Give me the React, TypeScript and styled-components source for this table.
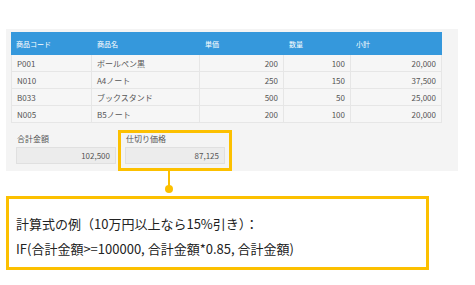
import React from "react";
import styled, { createGlobalStyle } from "styled-components";

const Global = createGlobalStyle`
  html, body { margin: 0; padding: 0; background: #fff; }
  body { font-family: "Noto Sans CJK JP", "Noto Sans", sans-serif; }
`;

const YELLOW = "#fcc000";

const Page = styled.div`
  width: 475px;
  height: 285px;
  padding: 29px 0 0 6px;
  box-sizing: border-box;
`;

const Panel = styled.div`
  width: 452px;
  height: 142px;
  background: #f4f4f4;
  padding: 3px 0 0 5px;
  box-sizing: border-box;
  position: relative;
`;

const Table = styled.div`
  width: 431px;
  display: grid;
  grid-template-columns: 81px 108px 84px 67px 91px;
`;

const HeadCell = styled.div`
  height: 23px;
  background: #3598dc;
  color: #fff;
  font-size: 7px;
  display: flex;
  align-items: center;
  padding-left: 5px;
  box-sizing: border-box;
`;

const Cell = styled.div<{ $num?: boolean }>`
  height: 17px;
  background: #f6f6f6;
  border-right: 1px solid #e6e6e6;
  border-bottom: 1px solid #e6e6e6;
  color: #555;
  font-size: 8px;
  display: flex;
  align-items: center;
  justify-content: ${(p) => (p.$num ? "flex-end" : "flex-start")};
  padding: 0 5px;
  box-sizing: border-box;
  &:nth-child(5n + 1) { border-left: 1px solid #e6e6e6; }
`;

const Summary = styled.div`
  display: flex;
  gap: 9px;
  padding: 11px 0 0 5px;
`;

const Field = styled.div`
  position: relative;
  display: flex;
  flex-direction: column;
  gap: 4px;
  width: 100px;
`;

const Label = styled.div`
  color: #555;
  font-size: 8px;
  height: 9px;
  line-height: 9px;
  padding-left: 1px;
`;

const Box = styled.div`
  height: 17px;
  background: #ececec;
  border: 1px solid #e0e0e0;
  box-sizing: border-box;
  color: #555;
  font-size: 8px;
  display: flex;
  align-items: center;
  justify-content: flex-end;
  padding-right: 5px;
`;

const Highlight = styled.div`
  position: absolute;
  left: -7px;
  top: -4px;
  width: 114px;
  height: 41px;
  border: 3px solid ${YELLOW};
  box-sizing: border-box;
`;

const Connector = styled.div`
  position: absolute;
  left: 47px;
  top: 38px;
  width: 2px;
  height: 18px;
  background: ${YELLOW};
  &::after {
    content: "";
    position: absolute;
    left: -3px;
    bottom: -4px;
    width: 8px;
    height: 8px;
    border-radius: 50%;
    background: ${YELLOW};
  }
`;

const Note = styled.div`
  margin-top: 25px;
  width: 423px;
  height: 74px;
  border: 3px solid ${YELLOW};
  box-sizing: border-box;
  padding: 16px 0 0 7px;
  display: flex;
  flex-direction: column;
  gap: 7px;
  color: #222;
  font-size: 13px;
`;

const NoteLine = styled.div`
  line-height: 18px;
  height: 18px;
`;

const rows = [
  ["P001", "ボールペン黒", "200", "100", "20,000"],
  ["N010", "A4ノート", "250", "150", "37,500"],
  ["B033", "ブックスタンド", "500", "50", "25,000"],
  ["N005", "B5ノート", "200", "100", "20,000"],
];

export default function App() {
  return (
    <Page>
      <Global />
      <Panel>
        <Table>
          {["商品コード", "商品名", "単価", "数量", "小計"].map((h) => (
            <HeadCell key={h}>{h}</HeadCell>
          ))}
          {rows.map((r) =>
            r.map((c, i) => (
              <Cell key={r[0] + i} $num={i >= 2}>
                {c}
              </Cell>
            ))
          )}
        </Table>
        <Summary>
          <Field>
            <Label>合計金額</Label>
            <Box>102,500</Box>
          </Field>
          <Field>
            <Label>仕切り価格</Label>
            <Box>87,125</Box>
            <Highlight>
              <Connector />
            </Highlight>
          </Field>
        </Summary>
      </Panel>
      <Note>
        <NoteLine>計算式の例（10万円以上なら15%引き）：</NoteLine>
        <NoteLine>IF(合計金額&gt;=100000, 合計金額*0.85, 合計金額)</NoteLine>
      </Note>
    </Page>
  );
}
